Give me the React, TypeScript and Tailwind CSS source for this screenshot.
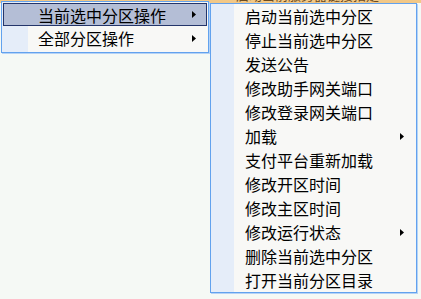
const subItems = [
  { label: "启动当前选中分区" },
  { label: "停止当前选中分区" },
  { label: "发送公告" },
  { label: "修改助手网关端口" },
  { label: "修改登录网关端口" },
  { label: "加载", sub: true },
  { label: "支付平台重新加载" },
  { label: "修改开区时间" },
  { label: "修改主区时间" },
  { label: "修改运行状态", sub: true },
  { label: "删除当前选中分区" },
  { label: "打开当前分区目录" },
];

const font = { fontFamily: '"Noto Sans CJK SC", "Noto Sans", sans-serif' };

// small solid triangle used for submenu arrows
const Arrow = () => (
  <svg width="4" height="7" viewBox="0 0 4 7" className="shrink-0">
    <path d="M0 0 L4 3.5 L0 7 Z" fill="#000" />
  </svg>
);

export default function App() {
  return (
    <div
      className="relative h-[299px] w-[421px] overflow-hidden bg-[#f5f9f5] text-[16px] text-black"
      style={font}
    >
      {/* window behind the menus */}
      <div className="h-[3px] overflow-hidden bg-[#f2c887]">
        <div className="-mt-[13px] pl-[236px] text-[13px] leading-[16px] text-[#6b4a1e]">
          启动当前服务器链接指定
        </div>
      </div>

      {/* top level menu */}
      <div className="absolute left-[1px] top-[1px] h-[52px] w-[208px] border border-[#62a2ee] bg-[linear-gradient(to_right,#e5edf9_26px,#f8f8f6_26px)] p-[1px] shadow-[1px_1px_0_#b5d3f6]">
        <div className="flex h-[23px] items-center border border-[#24356a] bg-[#b4bed6] pl-[34px] pr-[10px]">
          <span className="flex-1 leading-none">当前选中分区操作</span>
          <Arrow />
        </div>
        <div className="flex h-[24px] items-center pl-[35px] pr-[11px]">
          <span className="flex-1 leading-none">全部分区操作</span>
          <Arrow />
        </div>
      </div>

      {/* submenu */}
      <div className="absolute left-[210px] top-[3px] flex h-[290px] w-[207px] flex-col border border-[#62a2ee] bg-[linear-gradient(to_right,#e5edf9_23px,#f8f8f6_23px)] shadow-[1px_1px_0_#b5d3f6]">
        {subItems.map((it) => (
          <div key={it.label} className="flex h-[24px] items-center pl-[34px] pr-[12px]">
            <span className="flex-1 leading-none">{it.label}</span>
            {it.sub ? <Arrow /> : null}
          </div>
        ))}
      </div>
    </div>
  );
}
